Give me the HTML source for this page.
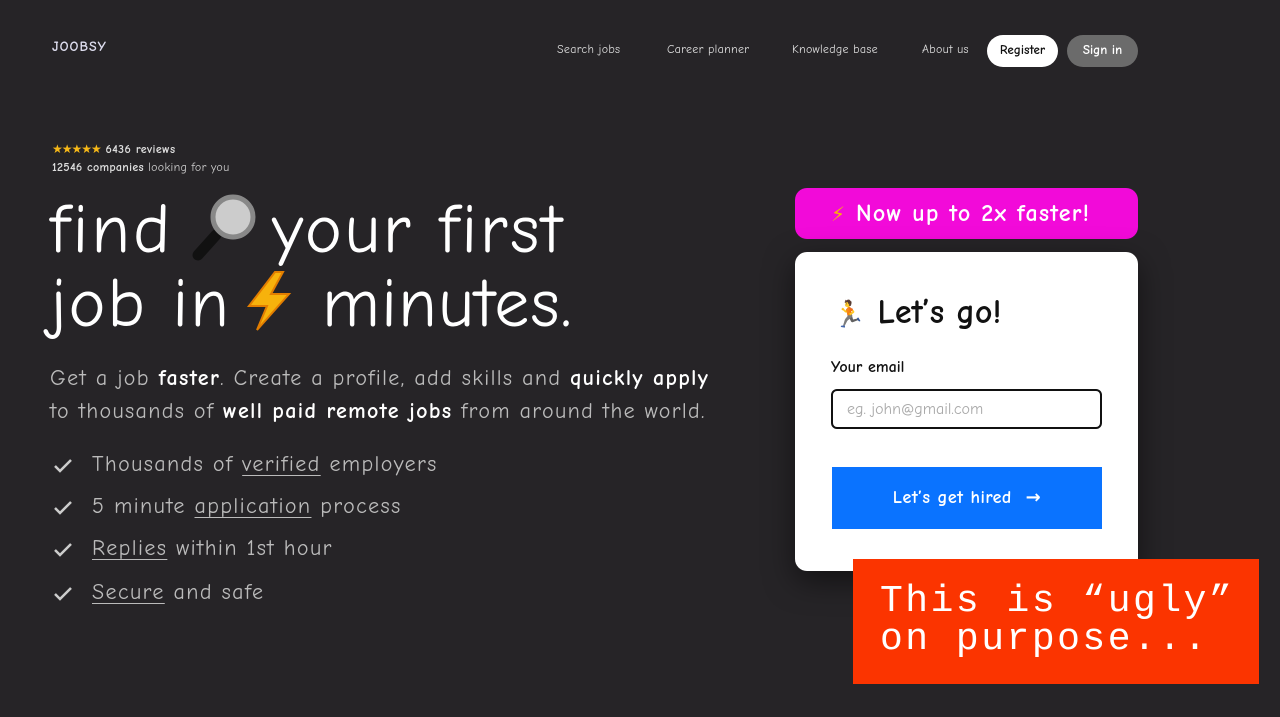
<!DOCTYPE html>
<html><head><meta charset="utf-8"><style>
*{margin:0;padding:0;box-sizing:border-box}
body{width:1280px;height:717px;background:#262427;font-family:"Comic Sans MS","Comic Neue","DejaVu Sans",sans-serif;color:#fff;position:relative;overflow:hidden}
.a{position:absolute;white-space:nowrap}
.nav{font-size:12px;color:#ddd;top:42px;letter-spacing:0.3px}
.h1{font-size:70px;color:#fff;letter-spacing:3px;line-height:74px}
.sub{font-size:22px;color:#bbb;left:50px;line-height:33px;letter-spacing:1.35px}
.sub b{color:#fff}
.li{font-size:22px;color:#bbb;left:92px;letter-spacing:1.4px}
.li u{text-decoration-thickness:1px;text-underline-offset:4px}
.chk{left:52px;width:22px;height:22px}
</style></head><body>
<div class="a" style="left:52px;top:38px;font-size:14px;font-weight:bold;color:#dde;letter-spacing:1px">JOOBSY</div>
<div class="a nav" style="left:557px">Search jobs</div>
<div class="a nav" style="left:667px">Career planner</div>
<div class="a nav" style="left:792px">Knowledge base</div>
<div class="a nav" style="left:922px">About us</div>
<div class="a" style="left:987px;top:35px;width:71px;height:32px;border-radius:16px;background:#fff;color:#111;font-size:13px;font-weight:bold;text-align:center;line-height:32px">Register</div>
<div class="a" style="left:1067px;top:35px;width:71px;height:32px;border-radius:16px;background:#6b6b6b;color:#fff;font-size:13px;font-weight:bold;text-align:center;line-height:32px">Sign in</div>

<div class="a" style="left:52px;top:142px;font-size:12px;color:#ddd;font-weight:bold;letter-spacing:0.4px"><span style="color:#f6b818;letter-spacing:-1px">★★★★★</span> 6436 reviews</div>
<div class="a" style="left:52px;top:160px;font-size:12px;color:#ccc;letter-spacing:0.3px"><b style="color:#ddd">12546 companies</b> looking for you</div>

<div class="a h1" style="top:193px;left:50px">find</div>
<div class="a h1" style="top:193px;left:272px;letter-spacing:2.6px">your first</div>
<div class="a h1" style="top:267px;left:50px;letter-spacing:2px">job in</div>
<div class="a h1" style="top:267px;left:322px;letter-spacing:1.2px">minutes.</div>
<svg class="a" style="left:190px;top:193px" width="72" height="70" viewBox="0 0 72 70"><line x1="8" y1="62" x2="26" y2="42" stroke="#111" stroke-width="11" stroke-linecap="round"/><circle cx="43" cy="24" r="20" fill="#ccc" stroke="#888" stroke-width="5"/></svg>
<svg class="a" style="left:245px;top:270px" width="50" height="62" viewBox="0 0 50 62"><polygon points="30,2 4,36 22,36 12,60 44,24 26,24 38,2" fill="#f7b20c" stroke="#e27d00" stroke-width="2"/></svg>

<div class="a sub" style="top:362px">Get a job <b>faster</b>. Create a profile, add skills and <b>quickly apply</b></div>
<div class="a sub" style="top:395px">to thousands of <b>well paid remote jobs</b> from around the world.</div>

<svg class="a chk" style="top:455px" viewBox="0 0 22 22"><path d="M3 11l5 5 11-11" fill="none" stroke="#ccc" stroke-width="2.5"/></svg>
<div class="a li" style="top:451px">Thousands of <u>verified</u> employers</div>
<svg class="a chk" style="top:497px" viewBox="0 0 22 22"><path d="M3 11l5 5 11-11" fill="none" stroke="#ccc" stroke-width="2.5"/></svg>
<div class="a li" style="top:493px">5 minute <u>application</u> process</div>
<svg class="a chk" style="top:539px" viewBox="0 0 22 22"><path d="M3 11l5 5 11-11" fill="none" stroke="#ccc" stroke-width="2.5"/></svg>
<div class="a li" style="top:535px"><u>Replies</u> within 1st hour</div>
<svg class="a chk" style="top:583px" viewBox="0 0 22 22"><path d="M3 11l5 5 11-11" fill="none" stroke="#ccc" stroke-width="2.5"/></svg>
<div class="a li" style="top:579px"><u>Secure</u> and safe</div>

<div class="a" style="left:795px;top:188px;width:343px;height:51px;border-radius:12px;background:#f20ad9;font-size:24px;font-weight:bold;color:#fff;line-height:51px;padding-left:36px;letter-spacing:1.2px"><span style="color:#f7b20c;font-size:20px">⚡</span> Now up to 2x faster!</div>
<div class="a" style="left:795px;top:252px;width:343px;height:319px;border-radius:12px;background:#fff;box-shadow:0 10px 30px rgba(0,0,0,.5)"></div>
<div class="a" style="left:833px;top:292px;font-size:34px;font-weight:bold;color:#111"><span style="font-size:26px;color:#e0a020">🏃</span> Let’s go!</div>
<div class="a" style="left:831px;top:358px;font-size:16px;font-weight:bold;color:#111">Your email</div>
<div class="a" style="left:831px;top:389px;width:271px;height:40px;border:2px solid #111;border-radius:6px;font-size:16px;color:#aaa;line-height:36px;padding-left:14px">eg. john@gmail.com</div>
<div class="a" style="left:832px;top:467px;width:270px;height:62px;background:#0a73ff;color:#fff;font-size:18px;font-weight:bold;text-align:center;line-height:62px;letter-spacing:0.5px">Let’s get hired &nbsp;→</div>

<div class="a" style="left:853px;top:559px;width:406px;height:125px;background:#fb3400;font-family:'Liberation Mono',monospace;font-size:38px;color:#fff;line-height:38px;padding:24px 0 0 27px;white-space:pre;letter-spacing:2.5px">This is “ugly”
on purpose...</div>
</body></html>
